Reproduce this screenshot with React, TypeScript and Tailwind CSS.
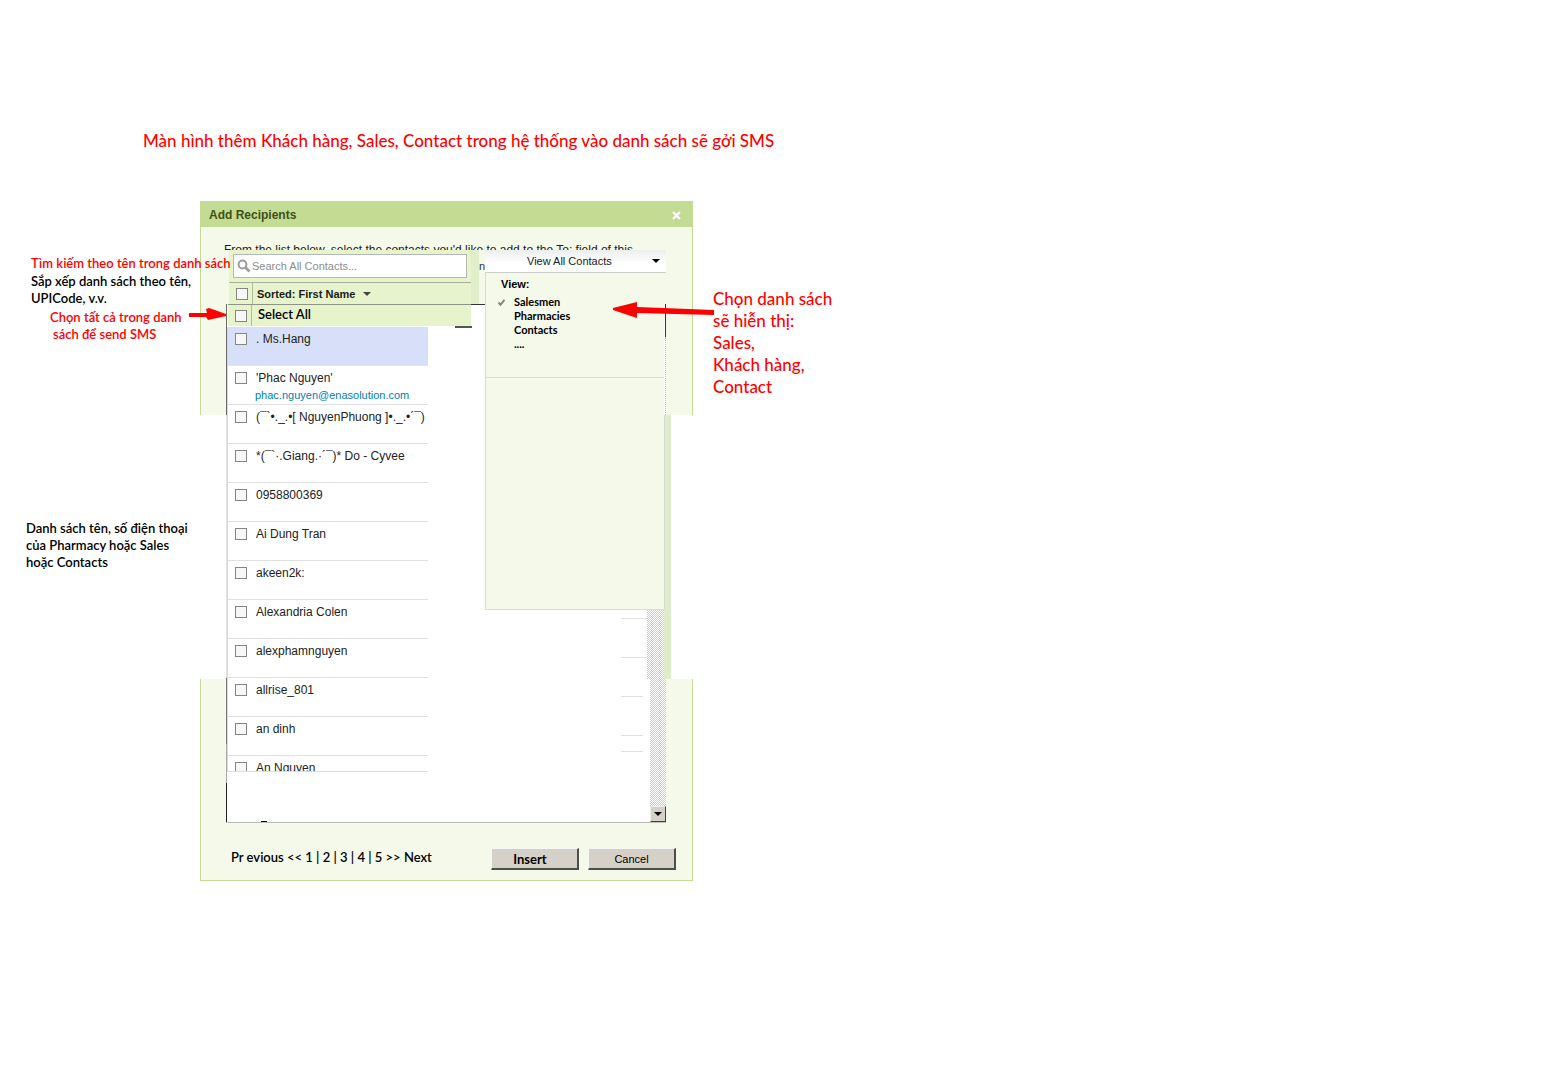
import React from "react";

const contacts: { name: string; email?: string }[] = [
  { name: ". Ms.Hang" },
  { name: "'Phac Nguyen'", email: "phac.nguyen@enasolution.com" },
  { name: "(¯`•._.•[ NguyenPhuong ]•._.•´¯)" },
  { name: "*(¯`·.Giang.·´¯)* Do - Cyvee" },
  { name: "0958800369" },
  { name: "Ai Dung Tran" },
  { name: "akeen2k:" },
  { name: "Alexandria Colen" },
  { name: "alexphamnguyen" },
  { name: "allrise_801" },
  { name: "an dinh" },
  { name: "An Nguyen" },
];

const box =
  "block h-3 w-3 shrink-0 appearance-none border border-[#858585] bg-[#f7f7f7] checked:bg-[#7b9b3c]";

function Hatch({ id }: { id: string }) {
  return (
    <svg className="h-full w-full" aria-hidden="true" shapeRendering="crispEdges">
      <defs>
        <pattern id={id} width="2" height="2" patternUnits="userSpaceOnUse">
          <rect width="2" height="2" fill="#ffffff" />
          <rect width="1" height="1" fill="#d0cbc2" />
          <rect x="1" y="1" width="1" height="1" fill="#d0cbc2" />
        </pattern>
      </defs>
      <rect width="100%" height="100%" fill={`url(#${id})`} />
    </svg>
  );
}

function LeftNotes() {
  return (
    <aside className="relative z-20 pt-[54px] text-[13px] leading-[17px] font-semibold whitespace-nowrap text-black">
      <p className="pl-[31px] text-[#ff0000]">Tìm kiếm theo tên trong danh sách</p>
      <p className="pl-[31px] pt-px">
        Sắp xếp danh sách theo tên,
        <br />
        UPICode, v.v.
      </p>
      <p className="pt-0.5 pl-[50px] text-[#ff0000]">
        Chọn tất cả trong danh
        <br />
        <span className="pl-[3px]">sách để send SMS</span>
      </p>
      <p className="pt-[177px] pl-[26px]">
        Danh sách tên, số điện thoại
        <br />
        của Pharmacy hoặc Sales
        <br />
        hoặc Contacts
      </p>
      <svg className="absolute top-[106px] left-[189px] h-4 w-[38px]" viewBox="0 0 38 16" aria-hidden="true">
        <path d="M0 6h18l-1-4 3-1 17 6v2l-18 4-2-3H0z" fill="#ff0000" />
      </svg>
    </aside>
  );
}

function RightNotes() {
  return (
    <aside className="relative pt-[87px] pl-5 text-[17px] leading-[22px] font-medium text-[#ff0000]">
      <p>
        Chọn danh sách
        <br />
        sẽ hiễn thị:
        <br />
        Sales,
        <br />
        Khách hàng,
        <br />
        Contact
      </p>
      <svg className="absolute top-[100px] -left-20 z-20 h-[18px] w-[101px]" viewBox="0 0 101 18" aria-hidden="true">
        <path d="M0 7L24 1v5l77 3v5l-77-2v5L0 9z" fill="#ff0000" />
      </svg>
    </aside>
  );
}

function SearchPanel() {
  return (
    <div className="flex h-[54px] bg-[#f5f9ea] pl-[3px]">
      <div className="min-w-0 flex-1 bg-[#e6f3cb] pt-1">
        <label className="mr-1 ml-1 flex h-6 items-center border border-[#b5b9ba] bg-white pl-[3px]">
          <span className="sr-only">Search All Contacts</span>
          <svg className="h-3.5 w-3.5 shrink-0" viewBox="0 0 14 14" fill="none" stroke="#9c9c9c" aria-hidden="true">
            <circle cx="5.5" cy="5.5" r="3.9" strokeWidth="2" />
            <path d="M8.5 8.5l4 4" strokeWidth="2.6" />
          </svg>
          <input
            type="text"
            placeholder="Search All Contacts..."
            className="w-full min-w-0 pl-px font-['Liberation_Sans',sans-serif] text-[11px] outline-none placeholder:text-[#8d8d8d]"
          />
        </label>
        <div className="mt-1 flex h-[22px] items-center border-t border-[#a9b0a0] pl-[7px]">
          <input type="checkbox" aria-label="Select sorted contacts" className={box} />
          <button className="ml-1 flex h-full items-center gap-2 border-l border-[#b4bda2] pt-px pl-1 font-['Liberation_Sans',sans-serif] text-[11px] font-bold text-[#1c1c1c]">
            Sorted: First Name
            <span className="h-0 w-0 border-x-4 border-t-4 border-x-transparent border-t-[#444]" />
          </button>
        </div>
      </div>
      <div className="w-2 bg-[#e1eecb]" />
      <span className="w-1.5 overflow-hidden pt-2 font-['Liberation_Sans',sans-serif] text-[11px] leading-4 text-[#333]">
        n
      </span>
    </div>
  );
}

function ContactList() {
  return (
    <div className="flex min-h-0 flex-1">
      <div className="flex w-px flex-col">
        <i className="h-[111px] bg-[#6a6a68]" />
        <i className="flex-1 bg-[#e2e2e2]" />
        <i className="h-[66px] bg-[#777777]" />
        <i className="h-[39px] bg-[#a8a8a8]" />
        <i className="h-[39px] bg-[#222]" />
      </div>
      <div className="flex min-w-0 flex-1 flex-col">
        <div className="flex h-[22px]">
          <label className="ml-px flex flex-1 items-center border-t border-[#8f9488] bg-[#e6f3cb] pl-[7px] text-[13px] font-semibold text-black">
            <input type="checkbox" className={box} />
            <span className="ml-1 flex h-full items-center border-l border-[#b4bda2] pb-0.5 pl-1.5">Select All</span>
          </label>
          <div className="w-3.5 border-t border-[#333] bg-white" />
        </div>
        <i className="ml-[228px] h-0.5 w-[17px] bg-[#555]" />
        <ul className="-mt-px h-[445px] w-[201px] overflow-hidden border-b border-[#dedede]">
          {contacts.map((c, i) => (
            <li
              key={c.name}
              className={
                i === 0
                  ? "h-[39px] border-b border-l border-b-[#e4e4e4] border-l-[#d8d8d8] bg-[#d8e0f9]"
                  : "h-[39px] border-b border-l border-b-[#e0e0e0] border-l-[#d8d8d8] bg-white"
              }
            >
              <label className="flex items-start pt-1.5 pl-[7px]">
                <input type="checkbox" className={box} />
                <span className="-mt-px ml-[9px] font-['Liberation_Sans',sans-serif] whitespace-nowrap text-[#222]">
                  <span className="block text-xs leading-[14px]">{c.name}</span>
                  {c.email && (
                    <span className="mt-[3px] -ml-px block text-[11px] leading-[14px] text-[#0080b4]">{c.email}</span>
                  )}
                </span>
              </label>
            </li>
          ))}
        </ul>
        <i className="mt-auto ml-[34px] h-px w-1.5 bg-black" />
      </div>
    </div>
  );
}

function ViewMenu() {
  return (
    <div className="flex h-full w-[181px] flex-col">
      <button className="flex h-[23px] items-center border-b border-[#cfd0cc] bg-linear-to-b from-[#eceeee] to-white to-60% pr-1.5 pl-[42px] font-['Liberation_Sans',sans-serif] text-[11px] text-[#222]">
        View All Contacts
        <span className="ml-auto h-0 w-0 border-x-4 border-t-4 border-x-transparent border-t-black" />
      </button>
      <div className="flex">
        <div className="h-[337px] flex-1 border-b border-l border-[#d9dcd5] bg-[#f5f9ea] text-[11px] font-bold text-black">
          <div className="h-[105px] border-b border-[#d9dcd5] pt-1">
            <h3 className="pl-[15px] font-['Liberation_Sans',sans-serif] leading-[15px]">View:</h3>
            <ul className="pt-[3px] leading-[14px]">
              {["Salesmen", "Pharmacies", "Contacts", "...."].map((v, i) => (
                <li key={v}>
                  <button className="flex h-3.5 items-center pl-3">
                    <svg className="mr-[9px] h-[7px] w-[7px]" viewBox="0 0 7 7" fill="none" aria-hidden="true">
                      {i === 0 && <path d="M.5 3.5l2 2.3L6.5.8" stroke="#858585" strokeWidth="2" />}
                    </svg>
                    {v}
                  </button>
                </li>
              ))}
            </ul>
          </div>
        </div>
        <div className="flex w-0.5 flex-col">
          <i className="h-[31px] bg-[#f5f9ea]" />
          <i className="ml-px h-[33px] bg-[#333]" />
          <i className="ml-px h-[78px] border-l border-dotted border-[#bfc2ba]" />
          <i className="flex-1 border-l border-[#d5dccb] bg-[#dfecca]" />
        </div>
      </div>
      <div className="flex min-h-0 flex-1 justify-end">
        <div className="flex w-[26px] flex-col">
          <i className="h-[9px] border-b border-[#e0e0e0]" />
          <i className="h-[39px] border-b border-[#e0e0e0]" />
          <i className="mr-1 h-[39px] border-b border-[#e0e0e0]" />
          <i className="mr-1 h-[39px] border-b border-[#e0e0e0]" />
          <i className="mr-1 h-4 border-b border-[#e0e0e0]" />
        </div>
        <div className="flex w-[19px] flex-col">
          <div className="flex h-[69px]">
            <div className="w-[17px]">
              <Hatch id="track-top" />
            </div>
            <div className="w-0.5 bg-[#dfecca]" />
          </div>
          <div className="ml-[3px] min-h-0 flex-1">
            <Hatch id="track-bottom" />
          </div>
          <button
            aria-label="Scroll down"
            className="ml-[3px] flex h-4 items-center justify-center border border-t-[#eee] border-r-[#444] border-b-[#444] border-l-[#eee] bg-[#d5d1c9]"
          >
            <span className="h-0 w-0 border-x-4 border-t-4 border-x-transparent border-t-black" />
          </button>
        </div>
      </div>
    </div>
  );
}

const action =
  "h-[22px] w-[88px] border border-t-[#f6f6f4] border-l-[#f6f6f4] border-r-2 border-b-2 border-r-[#4d4d4b] border-b-[#4d4d4b] bg-[#d5d1c9] text-black";

function Dialog() {
  return (
    <section role="dialog" aria-label="Add Recipients" className="relative z-10">
      <header className="flex h-[26px] items-center justify-between bg-[#c4db93] pt-px pr-3 pl-[9px] font-['Liberation_Sans',sans-serif] text-xs font-bold text-[#3d5216]">
        <h2>Add Recipients</h2>
        <button aria-label="Close" className="mt-0.5">
          <svg className="h-[9px] w-[9px]" viewBox="0 0 9 9" stroke="#ffffff" strokeWidth="2.2" aria-hidden="true">
            <path d="M1 1l7 7M8 1L1 8" />
          </svg>
        </button>
      </header>
      <div className="h-[23px] overflow-hidden border-x border-[#c5da94] bg-[#f5f9ea] pt-4 pl-[23px] font-['Liberation_Sans',sans-serif] text-xs leading-[15px] whitespace-nowrap text-[#222]">
        From the list below, select the contacts you'd like to add to the To: field of this
      </div>
      <div className="flex h-[573px]">
        <div className="flex w-[26px] flex-col">
          <i className="h-[165px] border-l border-[#c5da94] bg-[#f5f9ea]" />
          <i className="flex-1" />
          <i className="h-36 border-l border-[#c5da94] bg-[#f5f9ea]" />
        </div>
        <div className="flex min-w-0 flex-1 border-b border-[#bdbdb8] bg-white">
          <div className="flex w-[259px] flex-col">
            <SearchPanel />
            <ContactList />
          </div>
          <ViewMenu />
        </div>
        <div className="flex w-[27px] flex-col">
          <i className="h-[165px] border-r border-[#c5da94] bg-[#f5f9ea]" />
          <i className="w-[5px] flex-1 bg-[#dfecca]" />
          <i className="h-36 border-r border-[#c5da94] bg-[#f5f9ea]" />
        </div>
      </div>
      <footer className="flex h-[58px] items-start border-x border-b border-[#c5da94] bg-[#f5f9ea] pt-[25px] pr-4 pl-[30px]">
        <nav aria-label="Pages" className="mt-px text-[13px] leading-[17px] font-semibold whitespace-pre text-black">
          <a href="#previous">Pr evious &lt;&lt;</a> <a href="#1">1</a> | <a href="#2">2</a> | <a href="#3">3</a> |{" "}
          <a href="#4">4</a> | <a href="#5">5</a> <a href="#next">&gt;&gt; Next</a>
        </nav>
        <div className="ml-auto flex gap-[9px]">
          <button className={`${action} pr-[9px] text-[13px] leading-4 font-bold`}>Insert</button>
          <button className={`${action} pt-px font-['Liberation_Sans',sans-serif] text-[11px]`}>Cancel</button>
        </div>
      </footer>
    </section>
  );
}

export default function App() {
  return (
    <main className="min-h-screen bg-white font-['Lato','Noto_Sans',sans-serif]">
      <h1 className="pt-[130px] pl-[143px] text-[17px] leading-[22px] font-medium text-[#ff0000]">
        Màn hình thêm Khách hàng, Sales, Contact trong hệ thống vào danh sách sẽ gởi SMS
      </h1>
      <div className="grid grid-cols-[200px_493px_1fr] pt-[49px]">
        <LeftNotes />
        <Dialog />
        <RightNotes />
      </div>
    </main>
  );
}
